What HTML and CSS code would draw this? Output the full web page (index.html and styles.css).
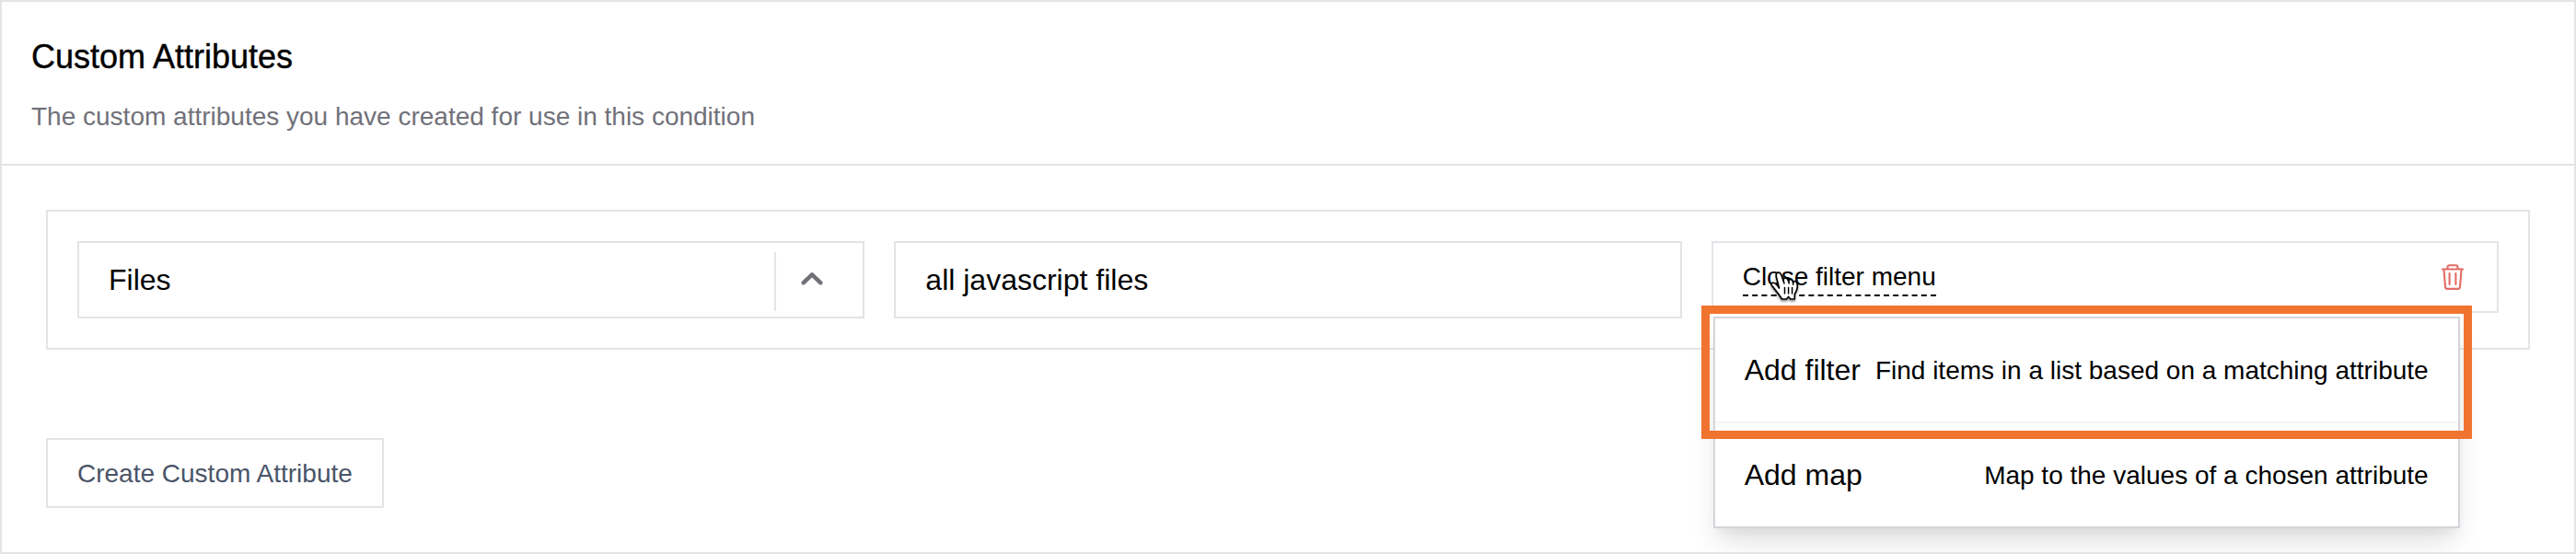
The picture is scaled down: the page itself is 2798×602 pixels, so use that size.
FILE: index.html
```html
<!DOCTYPE html>
<html lang="en">
<head>
<meta charset="utf-8">
<title>Custom Attributes</title>
<link rel="stylesheet" href="styles.css">
</head>
<body>
<section class="card">
  <header class="card-header">
    <h2 class="title">Custom Attributes</h2>
    <p class="subtitle">The custom attributes you have created for use in this condition</p>
  </header>
  <div class="card-body">
    <div class="row">
      <div class="field">
        <span class="field-text">Files</span>
        <span class="separator"></span>
        <svg class="chevron" viewBox="0 0 20 20"><path transform="rotate(180 10 10)" d="M4.516 7.548c0.436-0.446 1.043-0.481 1.576 0l3.908 3.747 3.908-3.747c0.533-0.481 1.141-0.446 1.574 0 0.436 0.445 0.408 1.197 0 1.615-0.406 0.418-4.695 4.502-4.695 4.502-0.217 0.223-0.502 0.335-0.787 0.335s-0.57-0.112-0.789-0.335c0 0-4.287-4.084-4.695-4.502s-0.436-1.17 0-1.615z"/></svg>
      </div>
      <div class="field"><span class="field-text">all javascript files</span></div>
      <div class="filter">
        <span class="filter-toggle">Close filter menu</span>
        <svg class="trash" viewBox="0 0 24 28" fill="none" stroke="currentColor" stroke-width="2.1" stroke-linecap="round" stroke-linejoin="round"><path d="M1 5.5H23M6.5 5V3.5Q6.5 1.2 8.8 1.2H15.2Q17.5 1.2 17.5 3.5V5M2.5 6L4 24.6Q4.2 26.9 6.4 26.9H17.6Q19.8 26.9 20 24.6L21.5 6M8.6 10V22M15.4 10V22"/></svg>
        <div class="menu">
          <div class="menu-item"><span class="menu-name">Add filter</span><span class="menu-desc">Find items in a list based on a matching attribute</span></div>
          <div class="menu-item"><span class="menu-name">Add map</span><span class="menu-desc">Map to the values of a chosen attribute</span></div>
          <div class="highlight"></div>
        </div>
        <svg class="cursor" viewBox="0 0 32 34"><path d="M9.5 19L6.8 8.5C5.6 4.7 6.2 2.6 8.3 2.2C10.4 1.9 11.6 3.8 12.5 6.4L14.3 11.6C13.8 8.7 15.1 7.6 16.6 7.8C18.5 8 19 9.5 19.8 12C19.6 10.2 20.8 9.3 22.3 9.7C23.9 10.1 24.3 11.6 24.7 13.2C25 11.7 26 11.2 27.3 11.7C29.3 12.6 29.5 15 29.3 18C29.1 21.8 26.7 23.8 26.3 26.2V31H21.8L19.6 28.5L17.4 31H12.4C11 28.5 8.4 24.9 6.5 22.6C4.6 20.2 3.4 18.1 1.9 16.8C.5 15.4.9 13.7 2.4 13.3C5.6 12.7 7.4 15.8 9.5 19Z" fill="#fff" stroke="#000" stroke-width="1.7" stroke-linejoin="round"/><path d="M14.3 11.6L15 14M19.8 12L20.2 14M24.7 13.2V15.3M15.5 18.5V25M19.6 18.5V25M23.6 18.5V25" fill="none" stroke="#000" stroke-width="1.5" stroke-linecap="round"/></svg>
      </div>
    </div>
    <button class="create">Create Custom Attribute</button>
  </div>
</section>
</body>
</html>
```

FILE: styles.css
```css
* { box-sizing: border-box; }
body {
  margin: 0;
  background: #fff;
  color: #000;
  font-family: "Liberation Sans", Arial, sans-serif;
  font-size: 32px;
  line-height: 48px;
}
.card {
  height: 602px;
  border: 2px solid #e4e4e4;
  overflow: hidden;
}
.card-header {
  height: 178px;
  padding: 32px;
  border-bottom: 2px solid #e4e4e4;
}
.title {
  margin: 0;
  font-size: 36px;
  font-weight: 400;
  line-height: 56px;
  -webkit-text-stroke: 0.4px #000;
}
.subtitle {
  margin: 17px 0 0;
  color: #71717a;
  font-size: 28px;
  line-height: 40px;
}
.card-body { padding: 48px; }
.row {
  display: grid;
  grid-template-columns: repeat(3, 1fr);
  align-items: start;
  gap: 32px;
  height: 152px;
  padding: 32px;
  border: 2px solid #e4e4e4;
}
.field {
  display: flex;
  align-items: center;
  height: 84px;
  padding-left: 32px;
  border: 2px solid #e4e4e4;
}
.field-text { flex: 1; }
.separator {
  width: 2px;
  height: 64px;
  margin-top: 4px;
  background: #e4e4e9;
}
.chevron {
  width: 40px;
  height: 40px;
  margin: 0 35px 0 19px;
  fill: #71717a;
}
.filter {
  position: relative;
  display: flex;
  justify-content: space-between;
  align-items: flex-start;
  height: 78px;
  padding: 16px 36px 0 32px;
  border: 2px solid #e4e4eb;
}
.filter-toggle {
  height: 42px;
  border-bottom: 2px dashed #000;
  font-size: 28px;
  line-height: 42px;
}
.trash {
  width: 24px;
  height: 28px;
  margin-top: 7px;
  color: #e46c66;
}
.menu {
  position: absolute;
  z-index: 1;
  top: 80px;
  left: 0;
  width: 811px;
  height: 230px;
  background: #fff;
  border: 2px solid #d4d4da;
  box-shadow: 0 20px 30px -6px rgba(0,0,0,.12), 0 8px 12px -4px rgba(0,0,0,.06);
}
.menu-item {
  display: flex;
  justify-content: space-between;
  align-items: center;
  height: 112px;
  padding: 0 32px;
  white-space: nowrap;
}
.menu-item:first-child {
  height: 114px;
  border-bottom: 2px solid #f4f4f5;
}
.menu-desc {
  padding-top: 2px;
  font-size: 28px;
}
.highlight {
  position: absolute;
  top: -14px;
  left: -15px;
  width: 837px;
  height: 145px;
  border: 9px solid #f0742f;
}
.cursor {
  position: absolute;
  z-index: 2;
  top: 30px;
  left: 62px;
  width: 32px;
  height: 34px;
  filter: drop-shadow(0 2px 1px rgba(0,0,0,.4));
}
.create {
  display: block;
  height: 76px;
  margin-top: 96px;
  padding: 2px 32px 0;
  background: #fff;
  border: 2px solid #e4e4e4;
  color: #4a5568;
  font: 28px "Liberation Sans", Arial, sans-serif;
}
```
